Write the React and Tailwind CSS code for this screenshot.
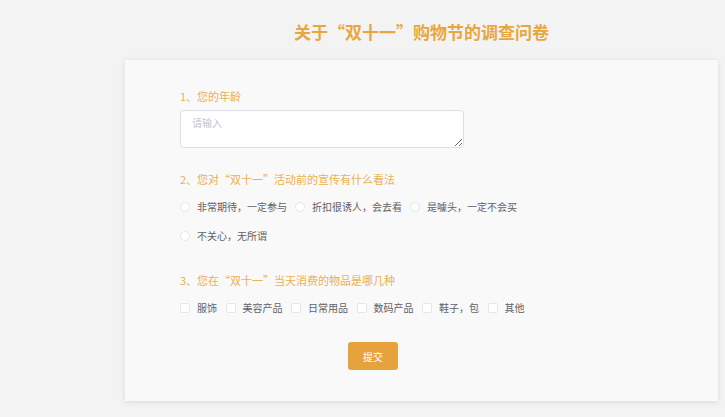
import React, { useState } from 'react';

const font = { fontFamily: '"Noto Sans CJK SC", "Noto Sans", sans-serif' };

const viewOptions = ['非常期待，一定参与', '折扣很诱人，会去看', '是噱头，一定不会买', '不关心，无所谓'];
const goods = ['服饰', '美容产品', '日常用品', '数码产品', '鞋子，包', '其他'];

function Radio({ label, checked, onChange }) {
  return (
    <label className="flex items-center gap-[7px] cursor-pointer" onClick={onChange}>
      <span className={`w-[10px] h-[10px] rounded-full border bg-white ${checked ? 'border-[#e6a23c]' : 'border-[#e4e7ed]'}`} />
      <span className="text-[10px] leading-[16px] text-[#606266]">{label}</span>
    </label>
  );
}

function Checkbox({ label, checked, onChange }) {
  return (
    <label className="flex items-center gap-[7px] cursor-pointer" onClick={onChange}>
      <span className={`w-[10px] h-[10px] rounded-[2px] border bg-white ${checked ? 'border-[#e6a23c]' : 'border-[#e4e7ed]'}`} />
      <span className="text-[10px] leading-[16px] text-[#606266]">{label}</span>
    </label>
  );
}

export default function App() {
  const [age, setAge] = useState('');
  const [view, setView] = useState(null);
  const [picked, setPicked] = useState([]);

  const toggle = (g) => setPicked((p) => (p.includes(g) ? p.filter((x) => x !== g) : [...p, g]));

  return (
    <div className="min-h-screen bg-[#f3f3f3] pl-[125px] pr-[7px] pt-[20px] pb-[17px]" style={font}>
      <h1 className="text-center text-[17px] leading-[24px] font-bold text-[#e8a73e] mb-[16px]">
        关于“双十一”购物节的调查问卷
      </h1>

      <div className="bg-[#f9f9f9] shadow-[0_1px_6px_0_rgba(0,0,0,0.1)] pl-[55px] pt-[28px] pb-[31px]">
        <div className="w-[386px]">
          {/* 1 */}
          <div className="text-[11px] leading-[16px] text-[#eab052]">1、您的年龄</div>
          <textarea
            value={age}
            onChange={(e) => setAge(e.target.value)}
            placeholder="请输入"
            className="mt-[6px] block w-[284px] h-[38px] bg-white border border-[#dcdfe6] rounded-[4px] px-[11px] py-[4px] text-[10px] leading-[16px] text-[#606266] placeholder:text-[#c0c4cc] outline-none"
          />

          {/* 2 */}
          <div className="mt-[23px] text-[11px] leading-[16px] text-[#eab052]">2、您对“双十一”活动前的宣传有什么看法</div>
          <div className="mt-[12px] flex flex-wrap gap-x-[8px] gap-y-[13px] w-[360px]">
            {viewOptions.map((o) => (
              <Radio key={o} label={o} checked={view === o} onChange={() => setView(o)} />
            ))}
          </div>

          {/* 3 */}
          <div className="mt-[28px] text-[11px] leading-[16px] text-[#eab052]">3、您在“双十一”当天消费的物品是哪几种</div>
          <div className="mt-[12px] flex gap-x-[8.5px]">
            {goods.map((g) => (
              <Checkbox key={g} label={g} checked={picked.includes(g)} onChange={() => toggle(g)} />
            ))}
          </div>

          <div className="mt-[26px] flex justify-center">
            <button className="w-[50px] h-[28px] rounded-[3px] bg-[#e6a23c] text-white text-[10px]">提交</button>
          </div>
        </div>
      </div>
    </div>
  );
}
